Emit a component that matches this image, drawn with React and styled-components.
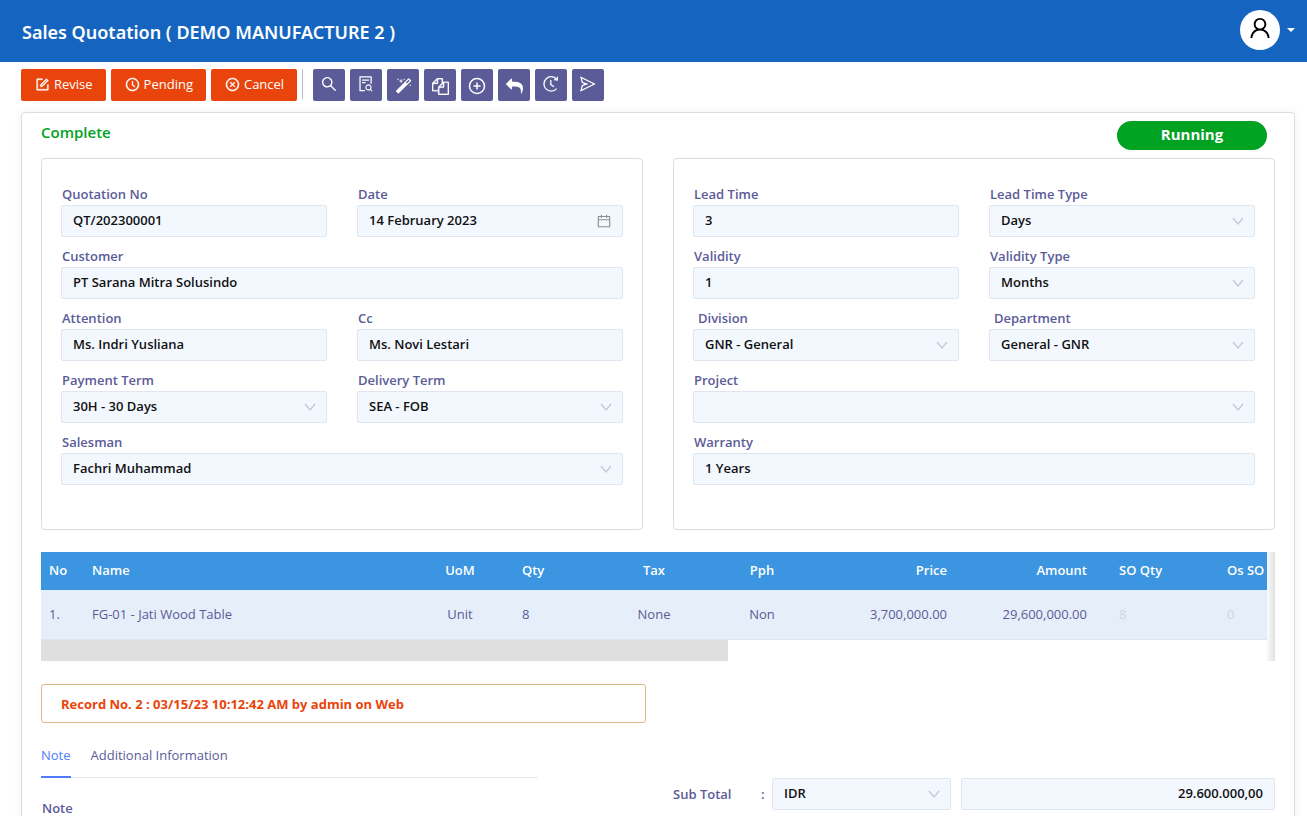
import React from "react";
import styled, { createGlobalStyle } from "styled-components";
import {
  AiOutlineForm,
  AiOutlineClockCircle,
  AiOutlineCloseCircle,
  AiOutlineSearch,
  AiOutlineFileSearch,
  AiOutlineSend,
  AiOutlineCalendar,
  AiOutlineUser,
} from "react-icons/ai";
import { FiPlusCircle } from "react-icons/fi";

// solid toolbar glyphs
const MagicIcon = () => (
  <svg width="17" height="17" viewBox="0 0 1792 1792" fill="currentColor">
    <path d="M1254 581l293-293-107-107-293 293zm447-293q0 27-18 45l-1286 1286q-18 18-45 18t-45-18l-198-198q-18-18-18-45t18-45l1286-1286q18-18 45-18t45 18l198 198q18 18 18 45zm-1351-190l98 30-98 30-30 98-30-98-98-30 98-30 30-98zm350 162l196 60-196 60-60 196-60-196-196-60 196-60 60-196zm930 478l98 30-98 30-30 98-30-98-98-30 98-30 30-98zm-640-640l98 30-98 30-30 98-30-98-98-30 98-30 30-98z" />
  </svg>
);

const CopyIcon = () => (
  <svg width="17" height="17" viewBox="0 0 1792 1792" fill="currentColor" stroke="currentColor" strokeWidth="30">
    <path d="M1696 384q40 0 68 28t28 68v1216q0 40-28 68t-68 28h-960q-40 0-68-28t-28-68v-288h-544q-40 0-68-28t-28-68v-672q0-40 20-88t48-76l408-408q28-28 76-48t88-20h416q40 0 68 28t28 68v328q68-40 128-40h416zm-544 213l-299 299h299v-299zm-640-384l-299 299h299v-299zm196 647l316-316v-416h-384v416q0 40-28 68t-68 28h-416v640h512v-256q0-40 20-88t48-76zm956 804v-1152h-384v416q0 40-28 68t-68 28h-416v640h896z" />
  </svg>
);

const ReplyIcon = () => (
  <svg width="17" height="17" viewBox="0 0 1792 1792" fill="currentColor">
    <path d="M1792 1120q0 166-127 451-3 7-10.5 24t-13.5 30-13 22q-12 17-28 17-15 0-23.5-10t-8.5-25q0-9 2.5-26.5t2.5-23.5q5-68 5-123 0-101-17.5-181t-48.5-138.5-80-101-105.5-69.5-133-42.5-154-21.5-175.5-6h-224v256q0 26-19 45t-45 19-45-19l-512-512q-19-19-19-45t19-45l512-512q19-19 45-19t45 19 19 45v256h224q713 0 875 403 53 134 53 333z" />
  </svg>
);

const HistoryIcon = () => (
  <svg width="18" height="18" viewBox="0 0 18 18" fill="none" stroke="currentColor" strokeWidth="1.3">
    <path d="M14.6 4.2A7.2 7.2 0 1 0 14.6 13.6" />
    <path d="M15.3 1.8v3.2l-3.2-.4" />
    <path d="M8.8 5v4.6l3.2 2.2" />
  </svg>
);

const ChevronIcon = () => (
  <svg width="12" height="12" viewBox="0 0 12 12" fill="none" stroke="currentColor" strokeWidth="1.2">
    <path d="M1 3l5 6 5-6" />
  </svg>
);

const actions = [
  { label: "Revise", Icon: AiOutlineForm },
  { label: "Pending", Icon: AiOutlineClockCircle },
  { label: "Cancel", Icon: AiOutlineCloseCircle },
];

const tools = [
  { title: "Search", icon: <AiOutlineSearch size={18} />, raised: true },
  { title: "Preview", icon: <AiOutlineFileSearch size={18} />, raised: true },
  { title: "Generate", icon: <MagicIcon /> },
  { title: "Copy", icon: <CopyIcon /> },
  { title: "Add", icon: <FiPlusCircle size={18} /> },
  { title: "Back", icon: <ReplyIcon /> },
  { title: "History", icon: <HistoryIcon />, raised: true },
  { title: "Send", icon: <AiOutlineSend size={18} />, raised: true },
];

const quotationFields = [
  { label: "Quotation No", value: "QT/202300001" },
  { label: "Date", value: "14 February 2023", type: "date" },
  { label: "Customer", value: "PT Sarana Mitra Solusindo", wide: true },
  { label: "Attention", value: "Ms. Indri Yusliana" },
  { label: "Cc", value: "Ms. Novi Lestari" },
  { label: "Payment Term", value: "30H - 30 Days", type: "select" },
  { label: "Delivery Term", value: "SEA - FOB", type: "select" },
  { label: "Salesman", value: "Fachri Muhammad", type: "select", wide: true },
];

const termFields = [
  { label: "Lead Time", value: "3" },
  { label: "Lead Time Type", value: "Days", type: "select" },
  { label: "Validity", value: "1" },
  { label: "Validity Type", value: "Months", type: "select" },
  { label: "Division", value: "GNR - General", type: "select", indent: true },
  { label: "Department", value: "General - GNR", type: "select", indent: true },
  { label: "Project", value: "", type: "select", wide: true },
  { label: "Warranty", value: "1 Years", wide: true },
];

const columns = [
  { title: "No", width: 43 },
  { title: "Name" },
  { title: "UoM", width: 108, align: "center" },
  { title: "Qty", width: 86 },
  { title: "Tax", width: 108, align: "center" },
  { title: "Pph", width: 108, align: "center" },
  { title: "Price", width: 139, align: "right" },
  { title: "Amount", width: 140, align: "right" },
  { title: "SO Qty", width: 108, spaced: true, muted: true },
  { title: "Os SO", width: 64, spaced: true, muted: true },
];

const rows = [
  ["1.", "FG-01 - Jati Wood Table", "Unit", "8", "None", "Non", "3,700,000.00", "29,600,000.00", "8", "0"],
];

function SelectBox({ id, value, ...rest }) {
  return (
    <Control>
      <Select id={id} defaultValue={value} {...rest}>
        <option value={value}>{value}</option>
      </Select>
      <ControlIcon>
        <ChevronIcon />
      </ControlIcon>
    </Control>
  );
}

function Field({ label, value, type, wide, indent }) {
  const id = label.toLowerCase().replace(/ /g, "-");
  return (
    <FieldWrapper $wide={wide}>
      <Label htmlFor={id} $indent={indent}>
        {label}
      </Label>
      {type === "select" ? (
        <SelectBox id={id} value={value} />
      ) : (
        <Control>
          <Input id={id} type="text" defaultValue={value} />
          {type === "date" && (
            <ControlIcon $dark>
              <AiOutlineCalendar size={16} />
            </ControlIcon>
          )}
        </Control>
      )}
    </FieldWrapper>
  );
}

function App() {
  return (
    <>
      <GlobalStyle />
      <Page>
        <Header>
          <Title>Sales Quotation ( DEMO MANUFACTURE 2 )</Title>
          <UserMenu aria-label="User menu">
            <Avatar>
              <AiOutlineUser size={26} />
            </Avatar>
            <Caret />
          </UserMenu>
        </Header>

        <Toolbar>
          {actions.map(({ label, Icon }) => (
            <ActionButton key={label}>
              <Icon size={15} strokeWidth={30} />
              {label}
            </ActionButton>
          ))}
          <Divider />
          {tools.map((tool) => (
            <ToolButton key={tool.title} aria-label={tool.title} $raised={tool.raised}>
              {tool.icon}
            </ToolButton>
          ))}
        </Toolbar>

        <Card>
          <StatusRow>
            <Status>Complete</Status>
            <Badge>Running</Badge>
          </StatusRow>

          <Columns>
            <Panel>
              {quotationFields.map((field) => (
                <Field key={field.label} {...field} />
              ))}
            </Panel>
            <Panel>
              {termFields.map((field) => (
                <Field key={field.label} {...field} />
              ))}
            </Panel>
          </Columns>

          <TableArea>
            <TableBody>
              <Table>
                <colgroup>
                  {columns.map((col) => (
                    <col key={col.title} width={col.width} />
                  ))}
                </colgroup>
                <thead>
                  <tr>
                    {columns.map((col) => (
                      <Th key={col.title} $align={col.align} $spaced={col.spaced}>
                        {col.title}
                      </Th>
                    ))}
                  </tr>
                </thead>
                <tbody>
                  {rows.map((row) => (
                    <tr key={row[0]}>
                      {row.map((cell, i) => (
                        <Td
                          key={columns[i].title}
                          $align={columns[i].align}
                          $spaced={columns[i].spaced}
                          $muted={columns[i].muted}
                        >
                          {cell}
                        </Td>
                      ))}
                    </tr>
                  ))}
                </tbody>
              </Table>
              <ScrollThumb />
            </TableBody>
            <EdgeShadow />
          </TableArea>

          <Record>Record No. 2 : 03/15/23 10:12:42 AM by admin on Web</Record>

          <Columns>
            <Notes>
              <Tabs role="tablist">
                <Tab role="tab" aria-selected="true" $active>
                  Note
                </Tab>
                <Tab role="tab" aria-selected="false">
                  Additional Information
                </Tab>
              </Tabs>
              <NoteLabel htmlFor="note">Note</NoteLabel>
              <NoteArea id="note" />
            </Notes>
            <Totals>
              <TotalLabel htmlFor="sub-total">Sub Total</TotalLabel>
              <Colon>:</Colon>
              <CurrencyCell>
                <SelectBox value="IDR" aria-label="Currency" />
              </CurrencyCell>
              <AmountCell>
                <Input id="sub-total" type="text" defaultValue="29.600.000,00" $right />
              </AmountCell>
            </Totals>
          </Columns>
        </Card>
      </Page>
    </>
  );
}

const GlobalStyle = createGlobalStyle`
  * {
    box-sizing: border-box;
  }

  body {
    margin: 0;
    background: #fff;
    color: #5b5b98;
    font-family: "Open Sans", "Noto Sans", sans-serif;
    font-size: 13px;
  }

  button, input, select, textarea {
    font-family: inherit;
    font-size: inherit;
  }

  svg {
    display: block;
    flex-shrink: 0;
  }
`;

const Page = styled.div`
  display: flex;
  flex-direction: column;
  height: 100vh;
  overflow: hidden;
`;

const Header = styled.header`
  display: flex;
  flex-shrink: 0;
  align-items: center;
  justify-content: space-between;
  height: 62px;
  padding: 0 12px 0 22px;
  background: #1565c0;
`;

const Title = styled.h1`
  margin: 0;
  padding-top: 2px;
  color: #fff;
  font-family: "Noto Sans", sans-serif;
  font-size: 18px;
  font-weight: 600;
`;

const UserMenu = styled.button`
  display: flex;
  align-items: center;
  gap: 7px;
  padding: 0 0 2px;
  border: 0;
  background: none;
`;

const Avatar = styled.span`
  display: flex;
  justify-content: center;
  width: 40px;
  height: 40px;
  padding-top: 5px;
  border-radius: 50%;
  background: #fff;
  color: #000;
`;

const Caret = styled.span`
  border: 4px solid transparent;
  border-top-color: #fff;
  border-bottom: 0;
`;

const Toolbar = styled.div`
  display: flex;
  flex-shrink: 0;
  gap: 5px;
  padding: 7px 21px 11px;
`;

const ActionButton = styled.button`
  display: flex;
  align-items: center;
  gap: 4px;
  height: 32px;
  padding: 0 13px 2px 14px;
  border: 0;
  border-radius: 2px;
  background: #e9440b;
  color: #fff;
  font-weight: 500;
`;

const Divider = styled.span`
  width: 1px;
  height: 30px;
  margin-right: 5px;
  background: #bfbfbf;
`;

const ToolButton = styled.button`
  display: flex;
  align-items: center;
  justify-content: center;
  width: 32px;
  height: 32px;
  padding: ${(props) => (props.$raised ? "0 0 2px" : "2px 0 0")};
  border: 0;
  border-radius: 2px;
  background: #5b5b98;
  color: #fff;
`;

const Card = styled.main`
  flex: 1 0 auto;
  margin: 0 12px 0 21px;
  padding: 8px 19px;
  border: 1px solid #dcdcdc;
  border-radius: 4px;
  box-shadow: 0 0 10px rgba(0, 0, 0, 0.06);
`;

const StatusRow = styled.div`
  display: flex;
  justify-content: space-between;
  height: 37px;
  padding-right: 8px;
`;

const Status = styled.strong`
  color: #00a222;
  font-size: 15px;
  font-weight: 600;
  line-height: 22px;
`;

const Badge = styled.span`
  width: 150px;
  height: 29px;
  border-radius: 15px;
  background: #00a222;
  color: #fff;
  font-size: 15px;
  font-weight: 700;
  line-height: 27px;
  text-align: center;
`;

const Columns = styled.div`
  display: grid;
  grid-template-columns: 1fr 1fr;
  column-gap: 30px;
`;

const Panel = styled.section`
  display: grid;
  grid-template-columns: 1fr 1fr;
  column-gap: 30px;
  row-gap: 8px;
  padding: 24px 19px 44px;
  border: 1px solid #dcdcdc;
  border-radius: 4px;
`;

const FieldWrapper = styled.div`
  grid-column: ${(props) => (props.$wide ? "1 / -1" : "auto")};
  min-width: 0;
`;

const Label = styled.label`
  display: block;
  padding-left: ${(props) => (props.$indent ? "5px" : "1px")};
  font-weight: 600;
  line-height: 22px;
`;

const Control = styled.div`
  position: relative;
`;

const Input = styled.input`
  display: block;
  width: 100%;
  height: 32px;
  padding: 0 11px 2px;
  border: 1px solid #dfe6ef;
  border-radius: 2px;
  background: #f3f8ff;
  color: #111;
  font-weight: 600;
  text-align: ${(props) => (props.$right ? "right" : "left")};
`;

const Select = styled.select`
  display: block;
  width: 100%;
  height: 32px;
  padding: 0 11px 2px;
  border: 1px solid #dfe6ef;
  border-radius: 2px;
  background: #f3f8ff;
  color: #111;
  font-weight: 600;
  appearance: none;
`;

const ControlIcon = styled.span`
  position: absolute;
  top: 0;
  right: 11px;
  display: flex;
  align-items: center;
  height: 32px;
  color: ${(props) => (props.$dark ? "#8c8f94" : "#c3c5d8")};
  pointer-events: none;
`;

const TableArea = styled.div`
  display: flex;
  margin-top: 22px;
`;

const TableBody = styled.div`
  flex: 1;
  min-width: 0;
  overflow: hidden;
`;

const EdgeShadow = styled.div`
  width: 8px;
  background: linear-gradient(to right, #fafafa, #e2e2e2);
`;

const Table = styled.table`
  width: 100%;
  table-layout: fixed;
  border-collapse: separate;
  border-spacing: 0;
`;

const Th = styled.th`
  height: 38px;
  padding: 0 0 2px ${(props) => (props.$spaced ? "24px" : "8px")};
  padding-right: ${(props) => (props.$spaced ? "0" : "8px")};
  background: #3b95e0;
  color: #fff;
  font-weight: 600;
  text-align: ${(props) => props.$align || "left"};
  white-space: nowrap;
`;

const Td = styled.td`
  height: 50px;
  padding: 0 8px 2px ${(props) => (props.$spaced ? "24px" : "8px")};
  border-bottom: 1px solid #dde5ee;
  background: #e6eff9;
  color: ${(props) => (props.$muted ? "#d3d5d8" : "#5b5b98")};
  text-align: ${(props) => props.$align || "left"};
  white-space: nowrap;
`;

const ScrollThumb = styled.div`
  width: 56%;
  height: 21px;
  background: #dfdfdf;
`;

const Record = styled.div`
  width: 49%;
  margin: 23px 0 15px;
  padding: 1px 19px 0;
  border: 1px solid #deb887;
  border-radius: 3px;
  color: #e9440b;
  font-weight: 700;
  line-height: 36px;
`;

const Notes = styled.div`
  margin-right: 105px;
`;

const Tabs = styled.div`
  display: flex;
  gap: 20px;
  height: 40px;
  border-bottom: 1px solid #e4e6ea;
`;

const Tab = styled.button`
  height: 40px;
  padding: 0 0 4px;
  border: 0;
  border-bottom: 2px solid ${(props) => (props.$active ? "#4d7cfe" : "transparent")};
  background: none;
  color: ${(props) => (props.$active ? "#4d7cfe" : "#5b5b98")};
`;

const NoteLabel = styled.label`
  display: block;
  padding: 22px 1px 0;
  font-weight: 600;
  line-height: 16px;
`;

const NoteArea = styled.textarea`
  display: block;
  width: 100%;
  height: 90px;
  margin-top: 4px;
  border: 1px solid #dfe6ef;
  border-radius: 2px;
  background: #f3f8ff;
  resize: none;
`;

const Totals = styled.div`
  display: flex;
  align-items: center;
  align-self: start;
  padding-top: 40px;
`;

const TotalLabel = styled.label`
  width: 88px;
  font-weight: 600;
`;

const Colon = styled.span`
  width: 11px;
  font-weight: 600;
`;

const CurrencyCell = styled.div`
  flex: 4;
`;

const AmountCell = styled.div`
  flex: 7;
  margin-left: 10px;
`;

export default App;
